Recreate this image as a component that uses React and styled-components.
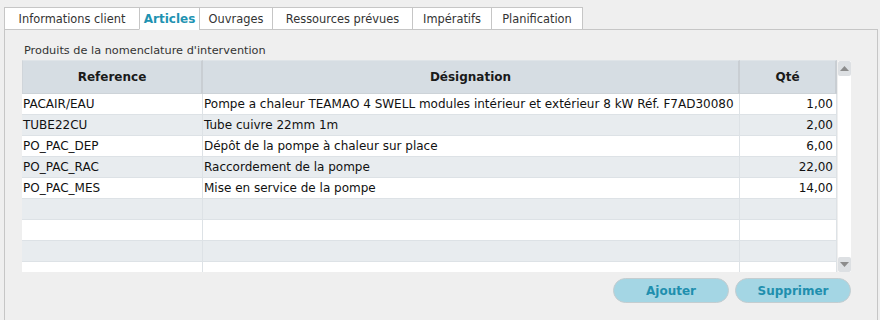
import React from "react";
import styled, { createGlobalStyle } from "styled-components";

const Global = createGlobalStyle`
  html, body { margin: 0; padding: 0; background: #efefef; }
  body { font-family: Verdana, "DejaVu Sans", sans-serif; font-size: 11px; color: #111; }
`;

const Page = styled.div`
  padding: 7px 0 0 4px;
  height: 313px;
  display: flex;
  flex-direction: column;
`;

const TabBar = styled.div`
  display: flex;
  position: relative;
  z-index: 1;
`;

const Tab = styled.div`
  width: ${(p) => p.$w}px;
  box-sizing: border-box;
  text-align: center;
  height: 23px;
  padding-top: 2px;
  line-height: 19px;
  background: #fff;
  border: 1px solid #c6c6c6;
  border-right: ${(p) => (p.$last ? "1px solid #c6c6c6" : "none")};
  border-bottom: 1px solid ${(p) => (p.$active ? "#fff" : "#c6c6c6")};
  color: ${(p) => (p.$active ? "#1f93b2" : "#333")};
  font-weight: ${(p) => (p.$active ? "bold" : "normal")};
  font-size: ${(p) => (p.$active ? "12px" : "11.4px")};
  white-space: nowrap;
`;

const Panel = styled.div`
  margin-top: -1px;
  flex: 1;
  border: 1px solid #c6c6c6;
  border-bottom: none;
  background: #efefef;
  padding: 12px 0 0 17px;
  box-sizing: border-box;
  width: 874px;
`;

const Caption = styled.div`
  color: #333;
  font-size: 11.3px;
  padding-left: 2px;
  height: 18px;
  line-height: 17px;
`;

const TableWrap = styled.div`
  display: flex;
  gap: 1px;
  width: 829px;
`;

const Table = styled.div`
  width: 815px;
  display: flex;
  flex-direction: column;
`;

const Cols = "181px 537px 97px";

const HeaderRow = styled.div`
  display: grid;
  grid-template-columns: ${Cols};
  height: 34px;
`;

const HeadCell = styled.div`
  background: #d6dde3;
  border-top: 1px solid #dfe4e8;
  border-bottom: 1px solid #cdd3d8;
  border-right: 2px solid #c9ced3;
  &:first-child { border-left: 1px solid #d0d5da; }
  display: flex;
  align-items: center;
  justify-content: center;
  font-weight: bold;
  font-size: 12px;
  color: #1a1a1a;
  box-sizing: border-box;
`;

const Body = styled.div`
  height: 178px;
  overflow: hidden;
`;

const Row = styled.div`
  display: grid;
  grid-template-columns: ${Cols};
  height: 21px;
  background: ${(p) => (p.$alt ? "#e8ecef" : "#fff")};
`;

const Cell = styled.div`
  border-bottom: 1px solid #dde2e6;
  border-right: 1px solid #dde2e6;
  padding: 0 ${(p) => (p.$right ? "3px" : "1px")} 0 1px;
  text-align: ${(p) => (p.$right ? "right" : "left")};
  font-size: 12px;
  line-height: 20px;
  white-space: nowrap;
  overflow: hidden;
  box-sizing: border-box;
`;

const Scroll = styled.div`
  width: 14px;
  margin-top: 1px;
  height: 211px;
  display: flex;
  flex-direction: column;
  background: #fff;
`;

const ScrollBtn = styled.div`
  height: 15px;
  background: #dde0e3;
  border-radius: 2px;
  display: flex;
  align-items: center;
  justify-content: center;
`;

const Track = styled.div`
  flex: 1;
  background: #fff;
`;

const Actions = styled.div`
  display: flex;
  justify-content: flex-end;
  gap: 6px;
  width: 829px;
  margin-top: 6px;
`;

const Button = styled.button`
  width: 116px;
  height: 25px;
  border-radius: 13px;
  border: 1px solid #c4cdd0;
  background: #a4d6e4;
  color: #1f8fae;
  font-family: Verdana, "DejaVu Sans", sans-serif;
  font-weight: bold;
  font-size: 12px;
  padding: 0;
  cursor: pointer;
`;

const Arrow = ({ up }) => (
  <svg width="9" height="5" viewBox="0 0 9 5">
    <polygon points={up ? "0,5 9,5 4.5,0" : "0,0 9,0 4.5,5"} fill="#8c8c8c" />
  </svg>
);

const tabs = [
  { label: "Informations client", w: 135 },
  { label: "Articles", w: 60, active: true },
  { label: "Ouvrages", w: 73 },
  { label: "Ressources prévues", w: 140 },
  { label: "Impératifs", w: 79 },
  { label: "Planification", w: 92 },
];

const rows = [
  ["PACAIR/EAU", "Pompe a chaleur TEAMAO 4 SWELL modules intérieur et extérieur 8 kW Réf. F7AD30080", "1,00"],
  ["TUBE22CU", "Tube cuivre 22mm 1m", "2,00"],
  ["PO_PAC_DEP", "Dépôt de la pompe à chaleur sur place", "6,00"],
  ["PO_PAC_RAC", "Raccordement de la pompe", "22,00"],
  ["PO_PAC_MES", "Mise en service de la pompe", "14,00"],
  ["", "", ""],
  ["", "", ""],
  ["", "", ""],
  ["", "", ""],
];

export default function App() {
  return (
    <>
      <Global />
      <Page>
        <TabBar>
          {tabs.map((t, i) => (
            <Tab key={t.label} $w={t.w} $active={t.active} $last={i === tabs.length - 1}>
              {t.label}
            </Tab>
          ))}
        </TabBar>
        <Panel>
          <Caption>Produits de la nomenclature d'intervention</Caption>
          <TableWrap>
            <Table>
              <HeaderRow>
                <HeadCell>Reference</HeadCell>
                <HeadCell>Désignation</HeadCell>
                <HeadCell>Qté</HeadCell>
              </HeaderRow>
              <Body>
                {rows.map((r, i) => (
                  <Row key={i} $alt={i % 2 === 1}>
                    <Cell>{r[0]}</Cell>
                    <Cell>{r[1]}</Cell>
                    <Cell $right>{r[2]}</Cell>
                  </Row>
                ))}
              </Body>
            </Table>
            <Scroll>
              <ScrollBtn><Arrow up /></ScrollBtn>
              <Track />
              <ScrollBtn><Arrow /></ScrollBtn>
            </Scroll>
          </TableWrap>
          <Actions>
            <Button>Ajouter</Button>
            <Button>Supprimer</Button>
          </Actions>
        </Panel>
      </Page>
    </>
  );
}
